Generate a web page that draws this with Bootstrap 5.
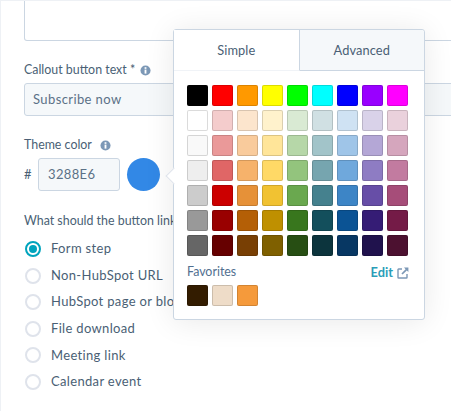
<!DOCTYPE html>
<html lang="en">
<head>
<meta charset="utf-8">
<title>Theme color</title>
<link href="https://cdn.jsdelivr.net/npm/bootstrap@5.3.0/dist/css/bootstrap.min.css" rel="stylesheet">
<style>
html,body{height:100%;margin:0;overflow:hidden;background:#fff}
body{font-family:"Lato","Open Sans",sans-serif;font-size:13px;color:#4a5f75}
.pane{position:relative;width:451px;height:411px;overflow:hidden;border-top:1px solid #eef1f5;border-left:1px solid #eef1f5;padding:0 0 0 23px}
.topbox{height:40px;width:450px;border:1px solid #cbd6e2;border-top:0;border-radius:0 0 0 3px;background:#fff}
.fieldlabel{font-size:12.4px;line-height:18px;margin:0;color:#4a5f75;display:flex;align-items:center;gap:8px}
.infoicon{width:11px;height:11px;flex:none;display:block}
.l1{margin-top:20px}
.l1 .infoicon{margin-left:-3px}
.wideinput{margin-top:4px;height:33px;width:450px;border:1px solid #cbd6e2;border-radius:3px;background:#f5f8fa;padding:0 8px;font-size:13px;line-height:31px;color:#5b7187;letter-spacing:.4px}
.l2{margin-top:20px}
.colorrow{margin-top:4px;height:33px}
.hashmark{width:14px;font-size:13px}
.hexinput{width:82px;height:33px;border:1px solid #cbd6e2;border-radius:3px;background:#f5f8fa;padding:0 9px;line-height:31px;font-size:13px;color:#5b7187;letter-spacing:.35px}
.colordot{width:33px;height:33px;border-radius:50%;background:#3288e6;margin-left:7px}
.l3{margin-top:21px}
.radios{margin-top:11px;display:flex;flex-direction:column;gap:10.6px}
.radioitem{display:flex;align-items:center;gap:10px;height:16px;padding-left:1px;font-size:13px;letter-spacing:.33px;white-space:nowrap;color:#4a5f75}
.radiodot{width:16px;height:16px;flex:none;border-radius:50%;border:2px solid #dfe3eb;background:#fff}
.radiodot.on{border-color:#00a4bd;display:flex;align-items:center;justify-content:center}
.radiodot.on::after{content:"";width:8px;height:8px;border-radius:50%;background:#00a4bd}
.pop{position:absolute;left:172px;top:28px;width:252px;height:291px;background:#fff;border:1px solid #cbd6e2;border-radius:3px;box-shadow:0 2px 30px 0 rgba(0,0,0,.09)}
.pop::before{content:"";position:absolute;left:-6px;top:140px;width:12px;height:12px;background:#fff;border-left:1px solid #dfe3eb;border-bottom:1px solid #dfe3eb;transform:rotate(45deg)}
.tabbar{height:41px;position:relative;z-index:1}
.tabbtn{flex:1 1 0;display:flex;align-items:center;justify-content:center;padding-top:1px;font-size:12.8px;color:#4a5f75;letter-spacing:.1px}
.tabbtn.sel{background:#fff;border-bottom:1px solid #f0f3f7;border-right:1px solid #cbd6e2}
.tabbtn.off{background:#f5f8fa;border-bottom:1px solid #cbd6e2;border-radius:0 3px 0 0}
.swatches{display:grid;grid-template-columns:repeat(9,21px);grid-auto-rows:21px;gap:4px;padding:14px 0 0 13px;position:relative;z-index:1}
.swatch{display:block;border-radius:2px;box-shadow:inset 0 0 0 1px rgba(0,0,0,.14)}
.favhead{padding:6px 15px 0 13px;height:27px}
.favtitle{font-size:12.4px;color:#516f90}
.editlink{font-size:12.8px;font-weight:700;color:#2a9db8;text-decoration:none;display:flex;align-items:center;gap:4px}
.favrow{display:flex;gap:4px;padding:2px 0 0 13px}
.favrow .swatch{width:21px;height:21px}
.c000000{background:#000}.cff0000{background:#f00}.cff9900{background:#f90}.cffff00{background:#ff0}.c00ff00{background:#0f0}.c00ffff{background:#0ff}.c0000ff{background:#00f}.c9900ff{background:#90f}.cff00ff{background:#f0f}
.cffffff{background:#fff}.cf4cccc{background:#f4cccc}.cfce5cd{background:#fce5cd}.cfff2cc{background:#fff2cc}.cd9ead3{background:#d9ead3}.cd0e0e3{background:#d0e0e3}.ccfe2f3{background:#cfe2f3}.cd9d2e9{background:#d9d2e9}.cead1dc{background:#ead1dc}
.cf9f9f9{background:#f9f9f9}.cea9999{background:#ea9999}.cf9cb9c{background:#f9cb9c}.cffe599{background:#ffe599}.cb6d7a8{background:#b6d7a8}.ca2c4c9{background:#a2c4c9}.c9fc5e8{background:#9fc5e8}.cb4a7d6{background:#b4a7d6}.cd5a6bd{background:#d5a6bd}
.ceeeeee{background:#eee}.ce06666{background:#e06666}.cf6b26b{background:#f6b26b}.cffd966{background:#ffd966}.c93c47d{background:#93c47d}.c76a5af{background:#76a5af}.c6fa8dc{background:#6fa8dc}.c8e7cc3{background:#8e7cc3}.cc27ba0{background:#c27ba0}
.ccccccc{background:#ccc}.ccc0000{background:#c00}.ce69138{background:#e69138}.cf1c232{background:#f1c232}.c6aa84f{background:#6aa84f}.c45818e{background:#45818e}.c3d85c6{background:#3d85c6}.c674ea7{background:#674ea7}.ca64d79{background:#a64d79}
.c999999{background:#999}.c990000{background:#900}.cb45f06{background:#b45f06}.cbf9000{background:#bf9000}.c38761d{background:#38761d}.c134f5c{background:#134f5c}.c0b5394{background:#0b5394}.c351c75{background:#351c75}.c741b47{background:#741b47}
.c666666{background:#666}.c660000{background:#600}.c783f04{background:#783f04}.c7f6000{background:#7f6000}.c274e13{background:#274e13}.c0c343d{background:#0c343d}.c073763{background:#073763}.c20124d{background:#20124d}.c4c1130{background:#4c1130}
.c331c00{background:#331c00}.ceedcc8{background:#eedcc8}.cf59a3b{background:#f59a3b}
</style>
</head>
<body>
<div class="pane">
  <div class="topbox"></div>
  <div class="fieldlabel l1">Callout button text *
    <svg class="infoicon" viewBox="0 0 12 12"><circle cx="6" cy="6" r="5.5" fill="#7c98b6"/><rect x="5" y="5" width="2" height="4.4" fill="#fff"/><rect x="5" y="2.4" width="2" height="1.8" fill="#fff"/></svg>
  </div>
  <div class="wideinput">Subscribe now</div>
  <div class="fieldlabel l2">Theme color
    <svg class="infoicon" viewBox="0 0 12 12"><circle cx="6" cy="6" r="5.5" fill="#7c98b6"/><rect x="5" y="5" width="2" height="4.4" fill="#fff"/><rect x="5" y="2.4" width="2" height="1.8" fill="#fff"/></svg>
  </div>
  <div class="colorrow d-flex align-items-center">
    <span class="hashmark">#</span>
    <div class="hexinput">3288E6</div>
    <div class="colordot"></div>
  </div>
  <div class="fieldlabel l3">What should the button link to?</div>
  <div class="radios">
    <div class="radioitem"><span class="radiodot on"></span>Form step</div>
    <div class="radioitem"><span class="radiodot"></span>Non-HubSpot URL</div>
    <div class="radioitem"><span class="radiodot"></span>HubSpot page or blog post</div>
    <div class="radioitem"><span class="radiodot"></span>File download</div>
    <div class="radioitem"><span class="radiodot"></span>Meeting link</div>
    <div class="radioitem"><span class="radiodot"></span>Calendar event</div>
  </div>

  <div class="pop">
    <div class="tabbar d-flex">
      <div class="tabbtn sel">Simple</div>
      <div class="tabbtn off">Advanced</div>
    </div>
    <div class="swatches">
      <span class="swatch c000000"></span><span class="swatch cff0000"></span><span class="swatch cff9900"></span><span class="swatch cffff00"></span><span class="swatch c00ff00"></span><span class="swatch c00ffff"></span><span class="swatch c0000ff"></span><span class="swatch c9900ff"></span><span class="swatch cff00ff"></span>
      <span class="swatch cffffff"></span><span class="swatch cf4cccc"></span><span class="swatch cfce5cd"></span><span class="swatch cfff2cc"></span><span class="swatch cd9ead3"></span><span class="swatch cd0e0e3"></span><span class="swatch ccfe2f3"></span><span class="swatch cd9d2e9"></span><span class="swatch cead1dc"></span>
      <span class="swatch cf9f9f9"></span><span class="swatch cea9999"></span><span class="swatch cf9cb9c"></span><span class="swatch cffe599"></span><span class="swatch cb6d7a8"></span><span class="swatch ca2c4c9"></span><span class="swatch c9fc5e8"></span><span class="swatch cb4a7d6"></span><span class="swatch cd5a6bd"></span>
      <span class="swatch ceeeeee"></span><span class="swatch ce06666"></span><span class="swatch cf6b26b"></span><span class="swatch cffd966"></span><span class="swatch c93c47d"></span><span class="swatch c76a5af"></span><span class="swatch c6fa8dc"></span><span class="swatch c8e7cc3"></span><span class="swatch cc27ba0"></span>
      <span class="swatch ccccccc"></span><span class="swatch ccc0000"></span><span class="swatch ce69138"></span><span class="swatch cf1c232"></span><span class="swatch c6aa84f"></span><span class="swatch c45818e"></span><span class="swatch c3d85c6"></span><span class="swatch c674ea7"></span><span class="swatch ca64d79"></span>
      <span class="swatch c999999"></span><span class="swatch c990000"></span><span class="swatch cb45f06"></span><span class="swatch cbf9000"></span><span class="swatch c38761d"></span><span class="swatch c134f5c"></span><span class="swatch c0b5394"></span><span class="swatch c351c75"></span><span class="swatch c741b47"></span>
      <span class="swatch c666666"></span><span class="swatch c660000"></span><span class="swatch c783f04"></span><span class="swatch c7f6000"></span><span class="swatch c274e13"></span><span class="swatch c0c343d"></span><span class="swatch c073763"></span><span class="swatch c20124d"></span><span class="swatch c4c1130"></span>
    </div>
    <div class="favhead d-flex justify-content-between align-items-center">
      <span class="favtitle">Favorites</span>
      <a class="editlink" href="#">Edit
        <svg width="12" height="12" viewBox="0 0 12 12" fill="none"><path d="M5 2H1.6C1.2 2 1 2.2 1 2.6v7.8c0 .4.2.6.6.6h7.8c.4 0 .6-.2.6-.6V7" stroke="#7c98b6" stroke-width="1.4"/><path d="M7 .6h4.4V5L9.8 3.4 5.6 7.6 4.4 6.4 8.6 2.2z" fill="#7c98b6"/></svg>
      </a>
    </div>
    <div class="favrow">
      <span class="swatch c331c00"></span><span class="swatch ceedcc8"></span><span class="swatch cf59a3b"></span>
    </div>
  </div>
</div>
<script src="https://cdn.jsdelivr.net/npm/bootstrap@5.3.0/dist/js/bootstrap.bundle.min.js"></script>
</body>
</html>
